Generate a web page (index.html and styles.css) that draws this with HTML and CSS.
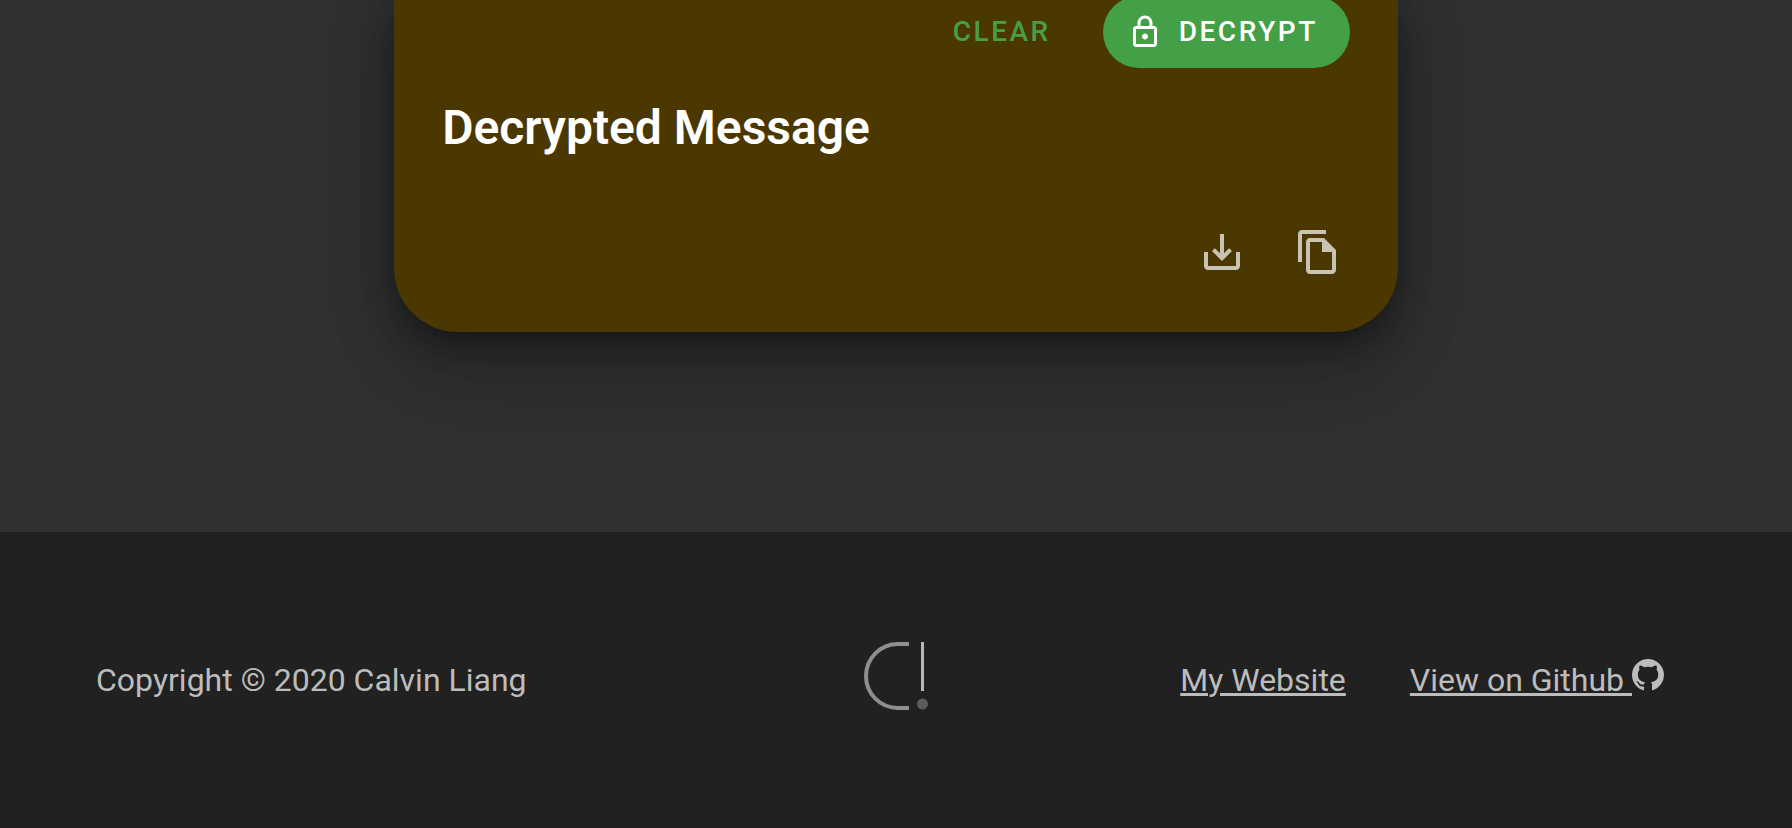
FILE: index.html
```html
<!DOCTYPE html>
<html lang="en">
<head>
<meta charset="utf-8">
<title>Decrypt Message</title>
<link rel="stylesheet" href="styles.css">
</head>
<body>
<main class="page">
  <section class="card">
    <div class="actions">
      <button type="button" class="btn btn-text">CLEAR</button>
      <button type="button" class="btn btn-filled">
        <svg class="btn-icon" viewBox="0 0 24 24" aria-hidden="true"><path d="M12 17c1.1 0 2-.9 2-2s-.9-2-2-2-2 .9-2 2 .9 2 2 2zm6-9h-1V6c0-2.76-2.24-5-5-5S7 3.24 7 6v2H6c-1.1 0-2 .9-2 2v10c0 1.1.9 2 2 2h12c1.1 0 2-.9 2-2V10c0-1.1-.9-2-2-2zM9 6c0-1.66 1.34-3 3-3s3 1.34 3 3v2H9V6zm9 14H6V10h12v10z"/></svg>
        <span>DECRYPT</span>
      </button>
    </div>
    <h1 class="title">Decrypted Message</h1>
    <div class="message"></div>
    <div class="tools">
      <button type="button" class="icon-btn" aria-label="Download">
        <svg viewBox="0 0 24 24" aria-hidden="true"><path d="M19 12v7H5v-7H3v7c0 1.1.9 2 2 2h14c1.1 0 2-.9 2-2v-7h-2zm-6 .67l2.59-2.58L17 11.5l-5 5-5-5 1.41-1.41L11 12.67V3h2v9.67z"/></svg>
      </button>
      <button type="button" class="icon-btn" aria-label="Copy">
        <svg viewBox="0 0 24 24" aria-hidden="true"><path fill-rule="evenodd" d="M16 1H4c-1.1 0-2 .9-2 2v14h2V3h12V1zM15 5H8c-1.1 0-1.99.9-1.99 2L6 21c0 1.1.89 2 1.99 2H19c1.1 0 2-.9 2-2V11l-6-6zM8 21V7h6v5h5v9H8z"/></svg>
      </button>
    </div>
  </section>
</main>
<footer class="footer">
  <p class="copyright">Copyright © 2020 Calvin Liang</p>
  <svg class="logo" viewBox="0 0 64 68" role="img" aria-label="Calvin Liang logo">
    <path d="M45 2H34a32 32 0 0 0 0 64H45" fill="none" stroke="#8e8e8e" stroke-width="4"/>
    <path d="M57 0h3v49h-3z" fill="#b8b8b8"/>
    <circle cx="58.5" cy="62" r="5.5" fill="#5c5c5c"/>
  </svg>
  <nav class="links">
    <a class="link" href="#website">My Website</a>
    <a class="link" href="#github">View on Github <svg class="github" viewBox="0 0 16 16" aria-hidden="true"><path d="M8 0C3.58 0 0 3.58 0 8c0 3.54 2.29 6.53 5.47 7.59.4.07.55-.17.55-.38 0-.19-.01-.82-.01-1.49-2.01.37-2.53-.49-2.69-.94-.09-.23-.48-.94-.82-1.13-.28-.15-.68-.52-.01-.53.63-.01 1.08.58 1.23.82.72 1.21 1.87.87 2.33.66.07-.52.28-.87.51-1.07-1.78-.2-3.64-.89-3.64-3.95 0-.87.31-1.59.82-2.15-.08-.2-.36-1.02.08-2.12 0 0 .67-.21 2.2.82.64-.18 1.32-.27 2-.27s1.36.09 2 .27c1.53-1.04 2.2-.82 2.2-.82.44 1.1.16 1.92.08 2.12.51.56.82 1.27.82 2.15 0 3.07-1.87 3.75-3.65 3.95.29.25.54.73.54 1.48 0 1.07-.01 1.93-.01 2.2 0 .21.15.46.55.38A8.01 8.01 0 0 0 16 8c0-4.42-3.58-8-8-8z"/></svg></a>
  </nav>
</footer>
</body>
</html>
```
FILE: styles.css
```css
* {
  box-sizing: border-box;
}

body {
  margin: 0;
  min-height: 100vh;
  display: flex;
  flex-direction: column;
  background: #303030;
  color: #fff;
  font-family: Roboto, sans-serif;
  overflow: hidden;
}

.page {
  padding-bottom: 200px;
}

.card {
  width: 56%;
  margin: -4px auto 0;
  padding: 0 48px 48px;
  border-radius: 0 0 64px 64px;
  background: #4b3700;
  box-shadow:
    0 8px 32px rgba(0, 0, 0, 0.25),
    0 20px 26px -12px rgba(0, 0, 0, 0.2),
    0 40px 62px 6px rgba(0, 0, 0, 0.14),
    0 16px 70px 10px rgba(0, 0, 0, 0.1);
}

.actions {
  display: flex;
  justify-content: flex-end;
  gap: 20px;
}

.btn {
  display: flex;
  align-items: center;
  gap: 16px;
  height: 72px;
  padding: 0 32px;
  border: 0;
  border-radius: 36px;
  font: 500 28px/40px Roboto, sans-serif;
  letter-spacing: 0.09em;
  cursor: pointer;
}

.btn-text {
  background: none;
  color: #43a047;
}

.btn-filled {
  padding-left: 24px;
  background: #43a047;
  color: #fff;
}

.btn-icon {
  width: 36px;
  height: 36px;
  fill: currentColor;
}

.title {
  margin: 24px 0 0;
  font-size: 48px;
  font-weight: 600;
  line-height: 72px;
}

.message {
  min-height: 56px;
}

.tools {
  display: flex;
  justify-content: flex-end;
  gap: 32px;
}

.icon-btn {
  display: flex;
  align-items: center;
  justify-content: center;
  width: 64px;
  height: 64px;
  padding: 0;
  border: 0;
  background: none;
  color: #c9c3b3;
  cursor: pointer;
}

.icon-btn svg {
  width: 48px;
  height: 48px;
  fill: currentColor;
}

.footer {
  flex: 1;
  display: grid;
  grid-template-columns: 1fr auto 1fr;
  align-items: center;
  padding: 0 96px 8px;
  border-bottom: 1px solid #281e22;
  background: #212121;
  color: #bcbcbc;
  font-size: 32px;
  line-height: 48px;
}

.copyright {
  margin: 0;
  padding-top: 8px;
}

.logo {
  width: 64px;
  height: 68px;
}

.links {
  display: flex;
  justify-content: flex-end;
  gap: 64px;
  padding: 8px 32px 0 0;
}

.link {
  color: inherit;
  white-space: nowrap;
}

.github {
  width: 32px;
  height: 32px;
  fill: currentColor;
}
```
